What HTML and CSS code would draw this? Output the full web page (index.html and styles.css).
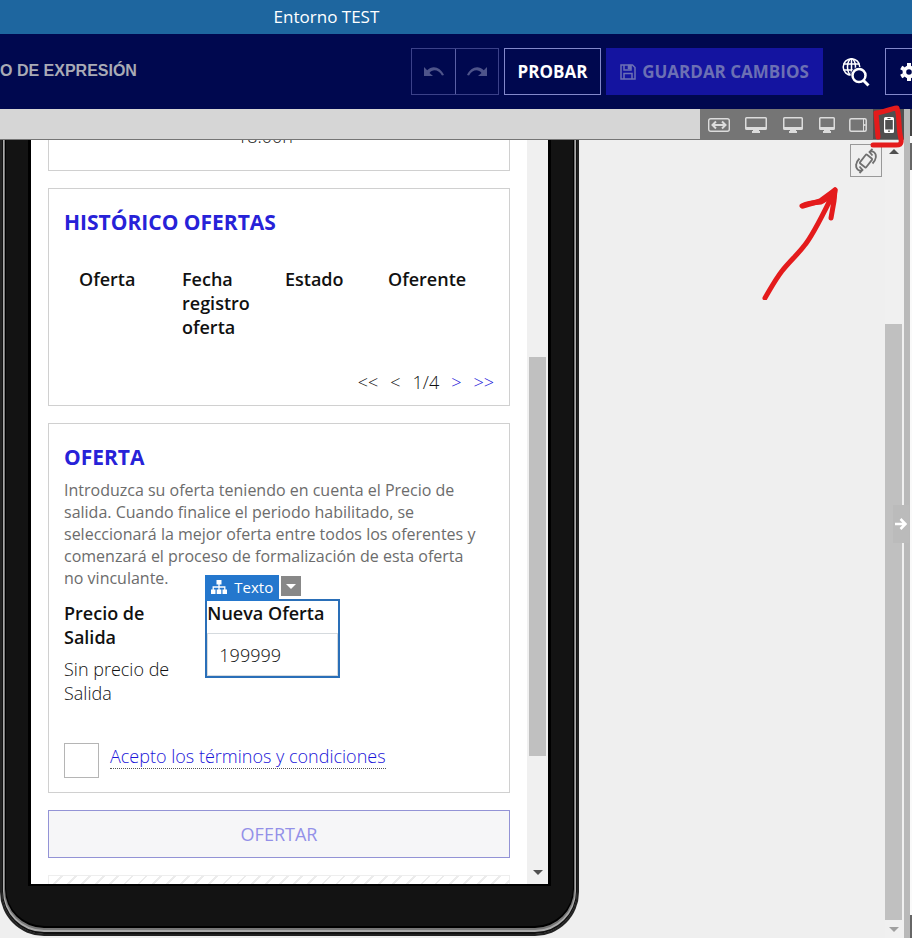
FILE: index.html
```html
<!DOCTYPE html>
<html lang="es">
<head>
  <meta charset="UTF-8">
  <meta name="viewport" content="width=device-width, initial-scale=1.0">
  <title>Editor - Entorno TEST</title>
  <link rel="stylesheet" href="styles.css">
</head>
<body>
  <div class="env-bar">Entorno TEST</div>

  <header class="header">
    <span class="header-title">O DE EXPRESIÓN</span>
    <div class="actions">
      <div class="history">
        <button type="button" aria-label="Deshacer" disabled>
          <svg width="22" height="12" viewBox="0 0 22 12"><path d="M1 1v9h9L6.500 7C9 3.500 15 2.500 19 9.500l2-.5C17.500 1 9.500-1.500 4.200 4.300z" fill="currentColor"/></svg>
        </button>
        <button type="button" aria-label="Rehacer" disabled>
          <svg width="22" height="12" viewBox="0 0 22 12"><path d="M21 1v9h-9l3.500-3C13 3.500 7 2.500 3 9.500L1 9C4.500 1 12.500-1.500 17.800 4.300z" fill="currentColor"/></svg>
        </button>
      </div>
      <button type="button" class="btn-test">PROBAR</button>
      <button type="button" class="btn-save" disabled>
        <svg width="16" height="16" viewBox="0 0 16 16" fill="none" stroke="currentColor" stroke-width="1.500"><path d="M1 1h11.500L15 3.500V15H1z"/><path d="M4 1v5h7V1M4 15V9.500h8V15"/><path d="M8.500 1.500h2v3h-2z" fill="currentColor"/></svg>
        GUARDAR CAMBIOS
      </button>
      <button type="button" class="btn-icon" aria-label="Buscar traducciones">
        <svg width="28" height="30" viewBox="0 0 28 30" fill="none" stroke="#fff">
          <g stroke-width="1.500"><circle cx="9.500" cy="10" r="8.300"/><ellipse cx="9.500" cy="10" rx="4" ry="8.300"/><path d="M9.500 1.500v17M1.500 7h16M1.500 13h16"/></g>
          <circle cx="17" cy="18.500" r="8.500" fill="#00084f" stroke="none"/>
          <circle cx="17" cy="18.500" r="6.500" stroke-width="2.500"/>
          <path d="M21.500 23.500l5 5" stroke-width="3"/>
        </svg>
      </button>
      <button type="button" class="btn-gear" aria-label="Configuración">
        <svg width="18" height="18" viewBox="0 0 18 18" fill="none" stroke="#fff"><circle cx="9" cy="9" r="4.600" stroke-width="3.600"/><path d="M9 0v3M9 15v3M1.200 4.500l2.600 1.500M14.200 12l2.600 1.500M1.200 13.500L3.800 12M14.200 6l2.600-1.500" stroke-width="4"/></svg>
      </button>
    </div>
  </header>

  <div class="main">
    <div class="editor">
      <div class="device-row">
        <div class="devices">
          <button type="button" aria-label="Ancho completo">
            <svg width="22" height="14" viewBox="0 0 22 14" fill="none" stroke="currentColor"><rect x=".7" y=".7" width="20.600" height="12.600" rx="2" stroke-width="1.400"/><path d="M4.500 7h13M8 3.500L4.500 7 8 10.500M14 3.500L17.500 7 14 10.500" stroke-width="2"/></svg>
          </button>
          <button type="button" aria-label="Escritorio grande">
            <svg width="22" height="16" viewBox="0 0 22 16"><path d="M1.500 0h19Q22 0 22 1.500v10Q22 13 20.500 13h-6.500v1h1v2H7v-2h1v-1H1.500Q0 13 0 11.500v-10Q0 0 1.500 0zM1.500 1.500V10h19V1.500z" fill="currentColor"/></svg>
          </button>
          <button type="button" aria-label="Escritorio">
            <svg width="20" height="16" viewBox="0 0 20 16"><path d="M1.500 0h17Q20 0 20 1.500v10q0 1.500-1.500 1.500H13v1h1v2H6v-2h1v-1H1.500Q0 13 0 11.500V1.500Q0 0 1.500 0zM1.500 1.500V10h17V1.500z" fill="currentColor"/></svg>
          </button>
          <button type="button" aria-label="Portátil" class="small">
            <svg width="16" height="16" viewBox="0 0 16 16"><path d="M1.500 0h13Q16 0 16 1.500v10q0 1.500-1.500 1.500H11v1h1v2H4v-2h1v-1H1.500Q0 13 0 11.500V1.500Q0 0 1.500 0zM1.500 1.500V10h13V1.500z" fill="currentColor"/></svg>
          </button>
          <button type="button" aria-label="Tableta" class="small">
            <svg width="18" height="14" viewBox="0 0 18 14"><rect x=".8" y=".8" width="16.400" height="12.400" rx="1.500" fill="none" stroke="currentColor" stroke-width="1.500"/><path d="M14.500 1v12" stroke="currentColor"/><circle cx="15.800" cy="7" r="1" fill="currentColor"/></svg>
          </button>
          <button type="button" aria-label="Móvil" class="small active">
            <svg width="10" height="16" viewBox="0 0 10 16"><path d="M1.500 0h7Q10 0 10 1.500v13Q10 16 8.500 16h-7Q0 16 0 14.500v-13Q0 0 1.500 0zM1.200 3v9.500h7.600V3z" fill="#fff"/><path d="M3.500 1.500h3" stroke="#555"/><circle cx="5" cy="14.200" r=".9" fill="#555"/></svg>
          </button>
        </div>
      </div>

      <div class="workspace">
        <div class="canvas">
          <div class="phone">
            <div class="screen">
              <div class="page">
                <section class="card card-time">18:00h</section>

                <section class="card card-history">
                  <h2>HISTÓRICO OFERTAS</h2>
                  <table>
                    <thead>
                      <tr>
                        <th scope="col">Oferta</th>
                        <th scope="col">Fecha registro oferta</th>
                        <th scope="col">Estado</th>
                        <th scope="col">Oferente</th>
                      </tr>
                    </thead>
                  </table>
                  <nav class="pager" aria-label="Paginación">
                    <span>&lt;&lt;</span>
                    <span>&lt;</span>
                    <span>1/4</span>
                    <a href="#siguiente">&gt;</a>
                    <a href="#ultima">&gt;&gt;</a>
                  </nav>
                </section>

                <section class="card card-offer">
                  <h2>OFERTA</h2>
                  <p class="intro">Introduzca su oferta teniendo en cuenta el Precio de salida. Cuando finalice el periodo habilitado, se seleccionará la mejor oferta entre todos los oferentes y comenzará el proceso de formalización de esta oferta no vinculante.</p>
                  <div class="fields">
                    <div class="field">
                      <span class="label">Precio de Salida</span>
                      <span>Sin precio de Salida</span>
                    </div>
                    <div class="field selected">
                      <div class="tag">
                        <span class="tag-name">
                          <svg width="16" height="14" viewBox="0 0 16 14" fill="#fff"><path d="M5.500 0h5v4.500h-5zM0 9.500h4.500V14H0zM5.700 9.500h4.600V14H5.700zM11.500 9.500H16V14h-4.500z"/><path d="M8 4v6M2.200 10V7h11.600v3" fill="none" stroke="#fff" stroke-width="1.300"/></svg>
                          Texto
                        </span>
                        <button type="button" class="tag-menu" aria-label="Opciones"></button>
                      </div>
                      <label class="label" for="nueva">Nueva Oferta</label>
                      <input type="text" id="nueva" value="199999">
                    </div>
                  </div>
                  <div class="terms">
                    <input type="checkbox" id="acepto" aria-label="Acepto los términos y condiciones">
                    <a href="#condiciones">Acepto los términos y condiciones</a>
                  </div>
                </section>

                <button type="button" class="btn-offer" disabled>OFERTAR</button>
                <div class="drop-zone"></div>
              </div>
              <div class="scroll scroll-phone">
                <div class="thumb"></div>
                <span class="arrow-down"></span>
              </div>
            </div>
          </div>
          <button type="button" class="rotate" aria-label="Girar dispositivo">
            <svg width="26" height="26" viewBox="0 0 26 26" fill="none" stroke="#707070" stroke-width="1.800">
              <rect x="9" y="7.500" width="8" height="11" rx="1" transform="rotate(38 13 13)"/>
              <path d="M16.500 4C20 2 23.500 5 22.800 9.500C22.500 12 21 14 19.500 15.500M19.500 1L16.500 4L19.500 7.500"/>
              <path d="M16.500 4C20 2 23.500 5 22.800 9.500C22.500 12 21 14 19.500 15.500M19.500 1L16.500 4L19.500 7.500" transform="rotate(180 13 13)"/>
            </svg>
          </button>
        </div>
        <div class="scroll scroll-main">
          <span class="arrow-up"></span>
          <div class="thumb"></div>
          <span class="arrow-down"></span>
        </div>
      </div>
    </div>

    <div class="splitter">
      <button type="button" class="collapse" aria-label="Ocultar panel">
        <svg width="12" height="12" viewBox="0 0 12 12" fill="none" stroke="#fff" stroke-width="2.500"><path d="M0 6h10M5.500 1l5 5-5 5"/></svg>
      </button>
    </div>
    <aside class="side-panel">
      <div class="side-tab"></div>
      <div class="side-head"></div>
      <div class="side-foot"></div>
    </aside>
  </div>

  <svg class="marks" width="150" height="200" viewBox="0 0 150 200" fill="none" stroke="#e41b1c" stroke-width="5" stroke-linecap="round" stroke-linejoin="round">
    <path d="M118 37L116 13C122 13 129 9 137 8C140 18 138 28 141 39C142 45 139 45 136 45L113 45"/>
    <path d="M5 198C11 188 15 180 22 171C30 161 38 154 44 146C54 134 63 114 75 90M42 106C50 102 55 103 61 102C66 100 70 95 75 90L74 101L71 118"/>
    <path d="M43 106L60 101L75 90L73 103"/>
  </svg>
</body>
</html>
```
FILE: styles.css
```css
* {
  box-sizing: border-box;
}

body {
  display: flex;
  flex-direction: column;
  height: 100vh;
  margin: 0;
  overflow: hidden;
  position: relative;
  font-family: "Open Sans", "Noto Sans", sans-serif;
  font-size: 18px;
  font-weight: 300;
  line-height: 24px;
  color: #111;
  background: #efefef;
}

button,
input {
  font: inherit;
  margin: 0;
  padding: 0;
}

button {
  display: flex;
  align-items: center;
  justify-content: center;
  border: none;
  background: none;
}

svg {
  display: block;
  flex: none;
}

.env-bar {
  flex: none;
  padding: 5px 30%;
  background: #1e669f;
  color: #fff;
  font-size: 17px;
  font-weight: 400;
}

/* header */
.header {
  display: flex;
  flex: none;
  align-items: center;
  justify-content: space-between;
  height: 75px;
  background: #00084f;
}

.header-title {
  padding-bottom: 2px;
  font-family: "Liberation Sans", Arial, sans-serif;
  font-size: 16px;
  font-weight: bold;
  color: #a9abb5;
  white-space: nowrap;
}

.actions {
  display: flex;
  gap: 5px;
  margin-right: -20px;
}

.actions button {
  height: 47px;
  font-size: 17px;
  font-weight: bold;
  white-space: nowrap;
}

.history {
  display: flex;
  border: 1px solid #3b4189;
}

.history button {
  width: 43px;
  height: 45px;
  color: #4e548a;
}

.history button + button {
  border-left: 1px solid #5a60a5;
}

.actions .btn-test {
  width: 97px;
  border: 1px solid #8388cb;
  color: #fff;
}

.actions .btn-save {
  gap: 6px;
  width: 217px;
  background: #1414a0;
  color: #6c70b4;
}

.btn-icon {
  width: 52px;
  padding-left: 4px;
}

.actions .btn-gear {
  width: 47px;
  border: 1px solid #8388cb;
}

/* editor */
.main {
  display: flex;
  flex: 1;
  min-height: 0;
}

.editor {
  display: flex;
  flex: 1;
  flex-direction: column;
  min-width: 0;
}

.device-row {
  display: flex;
  flex: none;
  justify-content: flex-end;
  height: 31px;
  border-bottom: 1px solid #757575;
  background: #d6d6d6;
}

.devices {
  display: flex;
  background: #757575;
}

.devices button {
  width: 37px;
  padding-top: 2px;
  color: #dcdcdc;
}

.devices .small {
  width: 31px;
}

.devices .active {
  background: #505050;
}

.workspace {
  display: flex;
  flex: 1;
  min-height: 0;
}

.canvas {
  display: flex;
  flex: 1;
  align-items: flex-start;
  justify-content: space-between;
  min-width: 0;
  overflow: hidden;
}

.rotate {
  width: 32px;
  height: 33px;
  margin: 4px 3px 0 0;
  border: 1px solid #999;
}

/* device frame */
.phone {
  flex: none;
  width: 579px;
  padding: 0 26px 48px;
  border: solid #222;
  border-width: 0 2px 2px;
  border-radius: 0 0 44px 44px;
  background: #131313;
  box-shadow: inset 0 -1px 0 1px #111, inset 0 -2px 0 2px #aaa, inset 0 -3px 0 3px #777, inset 0 -4px 0 4px #000;
}

.screen {
  display: flex;
  height: 746px;
  border: solid #000;
  border-width: 0 3px 2px;
  background: #fff;
  overflow: hidden;
}

.page {
  display: flex;
  flex: 1;
  flex-direction: column;
  gap: 17px;
  padding: 0 17px;
}

.page > * {
  flex: none;
}

.card {
  padding: 15px;
  border: 1px solid #d0d0d0;
}

.card-time {
  height: 60px;
  margin-top: -29px;
  padding: 12px 43px 0 15px;
  text-align: center;
}

.card h2 {
  margin: 4px 0 0;
  font-size: 21px;
  line-height: 28px;
  font-weight: bold;
  color: #2722d8;
}

.card-history {
  padding-bottom: 11px;
}

.card table {
  width: 412px;
  margin: 31px 0 0 15px;
  border-collapse: collapse;
  table-layout: fixed;
}

.card th {
  padding: 0 20px 0 0;
  font-weight: 600;
  text-align: left;
  vertical-align: top;
}

.pager {
  display: flex;
  justify-content: flex-end;
  gap: 12px;
  margin-top: 31px;
}

.card a {
  color: #1a14d8;
  text-decoration: none;
}

.card-offer {
  height: 370px;
}

.intro {
  margin: 8px 0 12px;
  padding-right: 11px;
  font-size: 16px;
  font-weight: 400;
  line-height: 22px;
  color: #6c6c6c;
}

.fields {
  display: grid;
  grid-template-columns: repeat(3, 1fr);
}

.field {
  display: flex;
  flex-direction: column;
  gap: 8px;
  margin-right: 13px;
}

.label {
  font-weight: 600;
}

.selected {
  position: relative;
  align-self: start;
  outline: 2px solid #2a6fb8;
  white-space: nowrap;
}

.selected input {
  width: 100%;
  height: 43px;
  padding: 0 11px;
  border: 1px solid #d5dade;
  color: #111;
}

.tag {
  position: absolute;
  bottom: 100%;
  left: -2px;
  display: flex;
  gap: 2px;
}

.tag-name {
  display: flex;
  align-items: center;
  gap: 7px;
  height: 26px;
  padding: 0 6px 2px 6px;
  background: #2477cd;
  color: #fff;
  font-size: 15px;
  font-weight: 400;
}

.tag-menu {
  width: 20px;
  height: 20px;
  margin-top: 1px;
  background: #888;
}

.tag-menu::before {
  content: "";
  border: 5px solid transparent;
  border-top-color: #fff;
  border-bottom: none;
}

.terms {
  display: flex;
  gap: 11px;
  margin-top: 38px;
}

.terms input {
  appearance: none;
  width: 35px;
  height: 35px;
  border: 1px solid #b5b5b5;
  background: #fff;
}

.terms a {
  align-self: flex-start;
  margin-top: 1px;
  border-bottom: 1px dotted #555;
}

.btn-offer {
  height: 48px;
  border: 1px solid #9393d6;
  background: #f6f6f8;
  color: #9390e8;
  font-weight: 500;
}

.drop-zone {
  height: 60px;
  border: 1px solid #eee;
  background: repeating-linear-gradient(135deg, #fff 0 8px, #ececec 8px 10px);
}

/* scrollbars */
.scroll {
  display: flex;
  flex: none;
  flex-direction: column;
  align-items: center;
  background: #f0f0f0;
}

.thumb {
  width: 17px;
  background: #c0c0c0;
}

.arrow-down,
.arrow-up {
  border: 5px solid transparent;
}

.arrow-down {
  margin-top: auto;
  border-top-color: #505050;
  border-bottom: none;
}

.arrow-up {
  border-bottom-color: #505050;
  border-top: none;
}

.scroll-phone {
  width: 21px;
  padding: 217px 0 9px;
}

.scroll-phone .thumb {
  height: 399px;
}

.scroll-main {
  width: 19px;
  padding: 9px 2px 6px 0;
}

.scroll-main .thumb {
  flex: 1;
  margin: 170px 0 7px;
}

.scroll-main .arrow-down {
  border-top-color: #a0a0a0;
}

/* right panel */
.splitter {
  display: flex;
  position: relative;
  flex: none;
  align-items: center;
  width: 6px;
  background: #b9b9b9;
}

.collapse {
  position: absolute;
  right: 1px;
  width: 16px;
  height: 38px;
  background: #bbb;
}

.side-panel {
  display: flex;
  flex: none;
  flex-direction: column;
  width: 2px;
  background: #fafafa;
}

.side-tab {
  height: 27px;
  background: #444;
}

.side-head {
  height: 27px;
  margin-top: 7px;
  background: #666;
}

.side-foot {
  height: 23px;
  margin-top: auto;
  background: #666;
}

/* hand drawn marks over the page */
.marks {
  position: absolute;
  top: 100px;
  right: 2px;
  pointer-events: none;
}
```
